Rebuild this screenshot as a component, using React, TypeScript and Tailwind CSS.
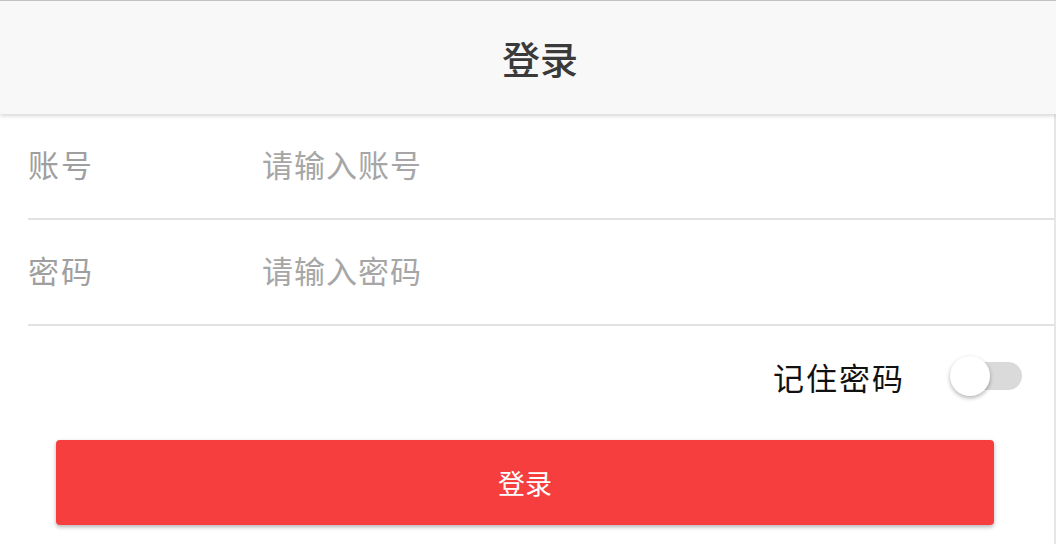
import { useState } from "react";

const font = { fontFamily: '"Noto Sans CJK SC", "Noto Sans", sans-serif' };

const Field = ({ label, placeholder, type = "text" }: { label: string; placeholder: string; type?: string }) => {
  const [value, setValue] = useState("");
  return (
    <div className="flex h-[106px] items-center border-b-2 border-[#e2e2e2] pb-[6px]">
      <span className="w-[234px] shrink-0 text-[31px] leading-none tracking-[2px] text-[#9f9f9f]">{label}</span>
      <input
        type={type}
        value={value}
        onChange={(e) => setValue(e.target.value)}
        placeholder={placeholder}
        className="min-w-0 flex-1 bg-transparent text-[31px] leading-none tracking-[1px] text-[#333] outline-none placeholder:text-[#a6a6a6]"
      />
    </div>
  );
};

export default function App() {
  const [remember, setRemember] = useState(false);

  return (
    <div className="h-[544px] w-full overflow-hidden border-t border-[#c2c2c2] bg-white" style={font}>
      {/* Header */}
      <header className="relative z-10 flex h-[113px] items-center justify-center bg-[#f8f8f8] pl-[24px] shadow-[0_2px_4px_rgba(0,0,0,0.16)]">
        <h1 className="text-[38px] font-medium leading-none text-[#3a3a3a]">登录</h1>
      </header>

      <main className="h-full border-r-2 border-[#e6e6e6] pl-[28px]">
        <Field label="账号" placeholder="请输入账号" />
        <Field label="密码" placeholder="请输入密码" type="password" />

        {/* Remember password */}
        <div className="flex h-[104px] items-center justify-end pr-[32px] pb-[4px]">
          <span className="text-[31px] leading-none tracking-[2px] text-[#111]">记住密码</span>
          <button
            type="button"
            onClick={() => setRemember(!remember)}
            className={`relative ml-[47px] h-[28px] w-[70px] rounded-full ${remember ? "bg-[#f9a5a5]" : "bg-[#dadada]"}`}
          >
            <span
              className={`absolute top-[-6px] h-[40px] w-[40px] rounded-full shadow-[0_2px_4px_rgba(0,0,0,0.3)] ${
                remember ? "left-[32px] bg-[#f63e3f]" : "left-[-2px] bg-white"
              }`}
            />
          </button>
        </div>

        {/* Submit */}
        <div className="pl-[28px] pr-[60px] pt-[10px]">
          <button
            type="button"
            className="flex h-[85px] w-full items-center justify-center rounded-[4px] bg-[#f63e3f] text-[27px] leading-none text-white shadow-[0_2px_4px_rgba(0,0,0,0.3)]"
          >
            登录
          </button>
        </div>
      </main>
    </div>
  );
}
